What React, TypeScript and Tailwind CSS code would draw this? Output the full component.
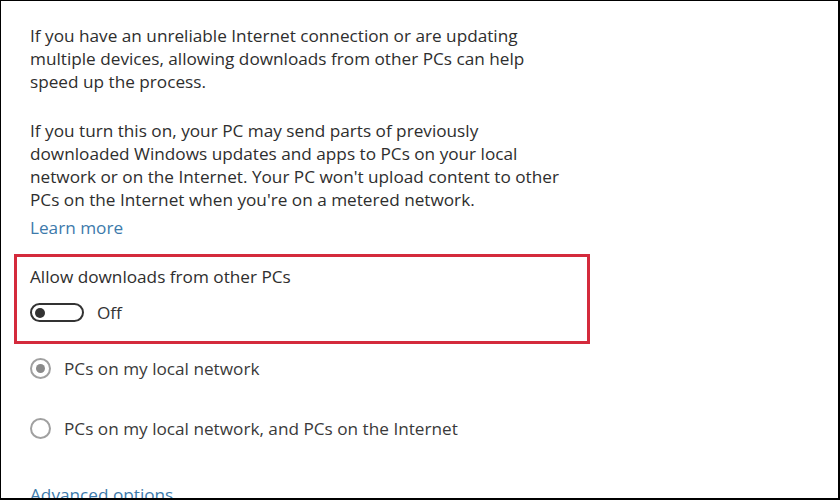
import React from 'react'

const font = { fontFamily: '"Open Sans", "Noto Sans", Arial, sans-serif' }

function Toggle() {
  return (
    <div className="flex items-center gap-[13px]">
      <div className="w-[54px] h-[19px] rounded-full border-2 border-[#333] flex items-center px-[3px]">
        <div className="w-[10px] h-[10px] rounded-full bg-[#333]" />
      </div>
      <span className="text-[#333]">Off</span>
    </div>
  )
}

function Radio({ label, checked }: { label: string; checked?: boolean }) {
  return (
    <div className="flex items-center gap-[13px] h-[23px]">
      <div className="w-[21px] h-[21px] rounded-full border-2 border-[#a0a0a0] flex items-center justify-center">
        {checked && <div className="w-[9px] h-[9px] rounded-full bg-[#8a8a8a]" />}
      </div>
      <span className="text-[#3a3a3a]">{label}</span>
    </div>
  )
}

export default function App() {
  return (
    <div
      className="w-[840px] h-[500px] overflow-hidden bg-white border-t border-l border-r-2 border-b-2 border-black text-[17.2px] leading-[23px] text-[#2e2e2e]"
      style={font}
    >
      <div className="pl-[13px] pt-[23px]">
        <div className="pl-[16px]">
          <p>
            If you have an unreliable Internet connection or are updating
            <br />
            multiple devices, allowing downloads from other PCs can help
            <br />
            speed up the process.
          </p>
          <p className="mt-[26px]">
            If you turn this on, your PC may send parts of previously
            <br />
            downloaded Windows updates and apps to PCs on your local
            <br />
            network or on the Internet. Your PC won't upload content to other
            <br />
            PCs on the Internet when you're on a metered network.
          </p>
          <a className="block mt-[5px] text-[#3d7aab]">Learn more</a>
        </div>

        <div className="mt-[15px] w-[576px] border-[3px] border-[#d42a3c] pl-[13px] pt-[8px] pb-[17px]">
          <div>Allow downloads from other PCs</div>
          <div className="mt-[13px]">
            <Toggle />
          </div>
        </div>

        <div className="pl-[16px] mt-[13px] flex flex-col gap-[37px]">
          <Radio label="PCs on my local network" checked />
          <Radio label="PCs on my local network, and PCs on the Internet" />
        </div>

        <a className="block pl-[16px] mt-[43px] text-[#3d7aab]">Advanced options</a>
      </div>
    </div>
  )
}
